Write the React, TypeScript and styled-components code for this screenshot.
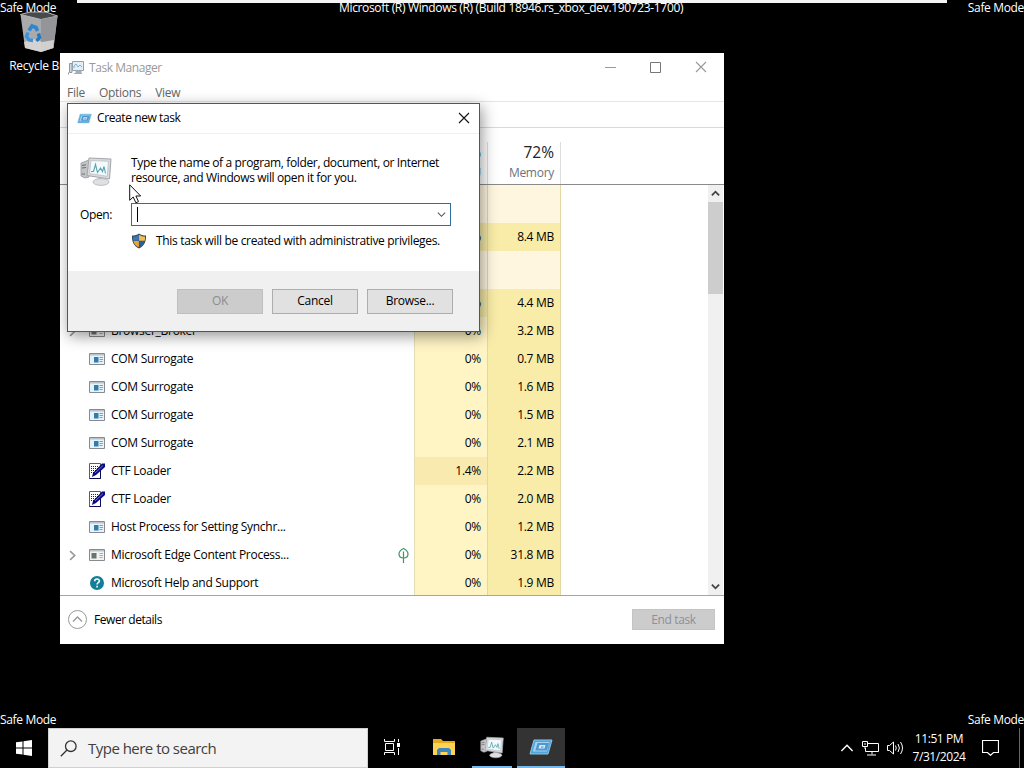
import styled, { createGlobalStyle } from "styled-components";

const GlobalStyle = createGlobalStyle`
  * {
    box-sizing: border-box;
  }

  body {
    margin: 0;
    background: #000;
    overflow: hidden;
  }
`;

const Desktop = styled.div`
  position: relative;
  width: 1024px;
  height: 768px;
  overflow: hidden;
  display: flex;
  flex-direction: column;
  background: #000;
  color: #000;
  font-family: "Open Sans", "Noto Sans", sans-serif;
  font-size: 12px;
  line-height: 16px;
  letter-spacing: -0.28px;
  white-space: nowrap;
`;

const Workspace = styled.main`
  flex: 1;
`;

const Watermark = styled.div<{ $edge: "top" | "bottom"; $side: "left" | "right" }>`
  position: absolute;
  ${(p) => (p.$edge === "top" ? "top: 0" : "bottom: 40px")};
  ${(p) => p.$side}: 0;
  color: #fff;
  letter-spacing: -0.34px;
`;

const BuildLabel = styled.div`
  position: absolute;
  top: 0;
  left: 339px;
  color: #fff;
  letter-spacing: -0.34px;
`;

const TopEdge = styled.div`
  position: absolute;
  top: 0;
  left: 77px;
  width: 870px;
  height: 3px;
  background: #f4f4f4;
`;

const DesktopIcon = styled.div`
  position: absolute;
  top: 10px;
  left: 9px;
  width: 60px;
  color: #fff;
  display: flex;
  flex-direction: column;
  align-items: center;
  gap: 4px;
`;

/* Task Manager window */

const Window = styled.section`
  position: absolute;
  top: 53px;
  left: 60px;
  width: 664px;
  height: 591px;
  background: #fff;
  display: flex;
  flex-direction: column;
`;

const TitleBar = styled.header`
  height: 30px;
  padding-left: 8px;
  display: flex;
  align-items: center;
  gap: 5px;
  color: #999;
`;

const WindowTitle = styled.span`
  flex: 1;
  letter-spacing: -0.44px;
`;

const WindowButtons = styled.div`
  display: flex;
  height: 29px;
  padding-bottom: 2px;
`;

const WindowButton = styled.div`
  width: 45.5px;
  display: flex;
  align-items: center;
  justify-content: center;
`;

const MenuBar = styled.nav`
  height: 19px;
  padding: 2px 0 0 7px;
  display: flex;
  align-items: center;
  gap: 14px;
  color: #666;
  border-bottom: 1px solid #e6e6e6;
`;

const TabStrip = styled.div`
  height: 26px;
  border-bottom: 1px solid #d9d9d9;
`;

const HeaderRow = styled.div`
  height: 57px;
  display: flex;
  align-items: flex-end;
  border-bottom: 1px solid #8a8a8a;
`;

const NameSpace = styled.div`
  width: 354px;
`;

const HeaderCell = styled.div<{ $width: number }>`
  width: ${(p) => p.$width}px;
  height: 42px;
  padding-right: 6px;
  border-right: 1px solid #dcdcdc;
  display: flex;
  flex-direction: column;
  align-items: flex-end;
  color: #6b7280;
`;

const HeaderValue = styled.span`
  font-size: 15.5px;
  line-height: 21px;
  color: #222;
  letter-spacing: 0;
`;

const HeaderLabel = styled.span`
  line-height: 20px;
`;

const ListArea = styled.div`
  height: 410px;
  display: flex;
  overflow: hidden;
`;

const Rows = styled.div`
  flex: 1;
`;

const Row = styled.div<{ $height: number }>`
  height: ${(p) => p.$height}px;
  display: flex;
`;

const NameCell = styled.div`
  width: 355px;
  padding: 0 5px 0 7px;
  border-right: 1px solid #e4dcb4;
  display: flex;
  align-items: center;
`;

const Expander = styled.div`
  width: 22px;
  display: flex;
`;

const ProcessName = styled.span`
  flex: 1;
  margin-left: 6px;
`;

const ValueCell = styled.div<{ $fill: string }>`
  width: 73px;
  padding-right: 6px;
  background: ${(p) => p.$fill};
  border-right: 1px solid #e2d8a4;
  display: flex;
  align-items: center;
  justify-content: flex-end;
`;

const ScrollBar = styled.div`
  width: 17px;
  padding: 0 1px 0 1px;
  background: #fff;
  display: flex;
`;

const ScrollTrack = styled.div`
  width: 15px;
  background: #f0f0f0;
  display: flex;
  flex-direction: column;
  align-items: center;
`;

const ScrollThumb = styled.div`
  width: 15px;
  height: 92px;
  background: #cdcdcd;
`;

const ScrollArrow = styled.div`
  height: 17px;
  display: flex;
  align-items: center;
`;

const TrackSpace = styled.div`
  flex: 1;
`;

const Footer = styled.footer`
  flex: 1;
  padding: 0 9px 1px 8px;
  border-top: 1px solid #a5a5a5;
  display: flex;
  align-items: center;
  gap: 7px;
`;

const FooterLabel = styled.span`
  flex: 1;
  letter-spacing: -0.45px;
`;

const EndTask = styled.button`
  width: 83px;
  height: 21px;
  padding: 0;
  border: 1px solid #c4c4c4;
  background: #cccccc;
  color: #8f8f98;
  font: inherit;
  letter-spacing: -0.35px;
`;

/* Run dialog */

const Dialog = styled.section`
  position: absolute;
  top: 103px;
  left: 67px;
  width: 413px;
  height: 229px;
  background: #fff;
  border: 1px solid #555;
  box-shadow: 2px 4px 14px rgba(0, 0, 0, 0.42);
  display: flex;
  flex-direction: column;
`;

const DialogTitle = styled.header`
  height: 30px;
  padding: 0 9px 1px 9px;
  display: flex;
  align-items: center;
  justify-content: space-between;
  border-bottom: 1px solid #f0f0f0;
  letter-spacing: -0.4px;
`;

const TitleGroup = styled.div`
  display: flex;
  align-items: center;
  gap: 5px;
`;

const DialogBody = styled.div`
  height: 137px;
  padding: 21px 0 0 12px;
  display: grid;
  grid-template-columns: 51px 320px;
  grid-template-rows: 48px 23px 30px;
`;

const Prompt = styled.p`
  margin: 0;
  line-height: 15px;
  letter-spacing: -0.36px;
`;

const OpenLabel = styled.label`
  align-self: center;
  letter-spacing: -0.4px;
`;

const ComboBox = styled.div`
  padding: 0 4px 0 5px;
  border: 1px solid #2f6f9f;
  display: flex;
  align-items: center;
  justify-content: space-between;
`;

const Caret = styled.div`
  width: 1px;
  height: 15px;
  background: #000;
`;

const Notice = styled.div`
  grid-column: 2;
  display: flex;
  align-items: center;
  gap: 9px;
  letter-spacing: -0.33px;
`;

const DialogButtons = styled.div`
  flex: 1;
  padding: 0 26px 0 0;
  background: #f0f0f0;
  display: flex;
  align-items: center;
  justify-content: flex-end;
  gap: 9px;
`;

const DialogButton = styled.button`
  width: 86px;
  height: 25px;
  padding: 0;
  background: #e1e1e1;
  border: 1px solid #adadad;
  color: #000;
  font: inherit;
  letter-spacing: -0.28px;

  &:disabled {
    background: #cccccc;
    border-color: #bfbfbf;
    color: #8c8c8c;
  }
`;

const Pointer = styled.svg`
  position: absolute;
  top: 184px;
  left: 129px;
`;

/* Taskbar */

const Taskbar = styled.footer`
  height: 40px;
  display: flex;
  color: #fff;
`;

const StartButton = styled.div`
  width: 48px;
  display: flex;
  align-items: center;
  justify-content: center;
`;

const SearchBox = styled.div`
  width: 320px;
  padding-left: 11px;
  background: #f3f3f3;
  border: 1px solid #d0d0d0;
  color: #404040;
  display: flex;
  align-items: center;
  gap: 11px;
  font-size: 15px;
  letter-spacing: -0.52px;
`;

const TaskButton = styled.div<{ $width: number; $running?: boolean; $active?: boolean }>`
  width: ${(p) => p.$width}px;
  margin-right: ${(p) => (p.$running && !p.$active ? 5 : 0)}px;
  background: ${(p) => (p.$active ? "#333" : "transparent")};
  border-bottom: 2px solid ${(p) => (p.$running ? "#76b9ed" : "transparent")};
  display: flex;
  align-items: center;
  justify-content: center;
`;

const Tray = styled.div`
  margin-left: auto;
  display: flex;
  align-items: center;
`;

const TrayIcons = styled.div`
  display: flex;
  align-items: center;
  gap: 8px;
`;

const Clock = styled.div`
  width: 70px;
  text-align: center;
  line-height: 18px;
  letter-spacing: -0.42px;
`;

const ActionCenter = styled.div`
  width: 45px;
  padding-left: 8px;
  display: flex;
`;

const ShowDesktop = styled.div`
  width: 5px;
  height: 40px;
  border-left: 1px solid #666;
`;

type ChevronProps = {
  dir: "up" | "down" | "right";
  size: number;
  color: string;
  weight?: number;
};

const Chevron = ({ dir, size, color, weight = 1.2 }: ChevronProps) => {
  const turn = { up: 0, down: 180, right: 90 }[dir];
  return (
    <svg width={size} height={size} viewBox="0 0 10 10">
      <path
        d="M1 7.2 5 3l4 4.2"
        fill="none"
        stroke={color}
        strokeWidth={weight}
        transform={`rotate(${turn} 5 5)`}
      />
    </svg>
  );
};

const Cross = ({ color }: { color: string }) => (
  <svg width="12" height="12" viewBox="0 0 12 12">
    <path d="M1 1l10 10M11 1 1 11" stroke={color} strokeWidth="1.1" />
  </svg>
);

const MonitorIcon = ({ size }: { size: number }) => (
  <svg width={size} height={size} viewBox="0 0 32 32">
    <path d="M1 8l8-3v17l-4 1-4-2z" fill="#c2c4c8" stroke="#94979c" strokeWidth=".8" />
    <path d="M2 10.500l4-.8M2 13l4-.5M2 19h3" stroke="#6b6e74" />
    <path d="M9 3l22 1-1.500 20L7 20.500z" fill="#d9dbde" stroke="#a3a6ab" />
    <path d="M11 5.500l17.500.8-1.200 15L9.500 18.500z" fill="#f3fafb" stroke="#b3bcc2" strokeWidth=".7" />
    <path d="M11 16.500h2.500l2-7 2 8 3-4.500 2 3.500 1.500-5 1.500 7" fill="none" stroke="#5aa3b3" strokeWidth="1.100" />
    <path d="M18 22.500l6 1v4h-7z" fill="#c3c5c9" />
    <ellipse cx="21" cy="27" rx="8" ry="3.400" fill="#dfe0e3" stroke="#b0b2b6" strokeWidth=".8" />
  </svg>
);

const SmallMonitorIcon = () => (
  <svg width="16" height="16" viewBox="0 0 16 16">
    <path d="M4 3.500H1.500v9H4zM.5 14.500v-2" fill="#d5dade" stroke="#8f979f" />
    <path d="M4.500 1.500h11v9h-11z" fill="#e3eef6" stroke="#8ba3b5" />
    <path d="M6 8V6l2-2 2 3 2-2 2 2" fill="none" stroke="#7fb0cf" />
    <path d="M8 11h5v2H8zM6 13.500h8" fill="#a6adb3" stroke="#a6adb3" />
  </svg>
);

const RunIcon = ({ width, height }: { width: number; height: number }) => (
  <svg width={width} height={height} viewBox="0 0 24 16">
    <path d="M5 1h18l-4 14H1z" fill="#4fa5d9" stroke="#8cc6e8" />
    <path d="M6.500 3h14l-2.700 9.500H3.800z" fill="#a5d3ef" />
    <path d="M8.500 4h11.500l-2.200 7.500H6.300z" fill="#4f97cf" />
    <path d="M10.500 6h6l-1 3.500h-6z" fill="#d3ebf9" />
    <path d="M12 8h2.500" stroke="#3f86c2" />
  </svg>
);

const AppIcon = ({ gray }: { gray?: boolean }) => (
  <svg width="16" height="12" viewBox="0 0 16 12">
    <path d="M.5.5h15v11H.5z" fill={gray ? "#f2f2f2" : "#e6f3fb"} stroke="#858b90" />
    <path d="M1 1h14v1.500H1z" fill="#b9c2c8" />
    <path d={gray ? "M2.500 4h5v5.500h-5z" : "M5 4h4.500v5.500H5z"} fill={gray ? "#68766f" : "#2f7dad"} />
    <path d="M10.500 4.500h3.500M10.500 6.500H14M10.500 8.500h3" stroke={gray ? "#a8adb0" : "#62a9d6"} />
  </svg>
);

const PenIcon = () => (
  <svg width="16" height="16" viewBox="0 0 16 16">
    <path d="M.5.5h11v15H.5z" fill="#fff" stroke="#55606a" />
    <path d="M2 3.500h8M2 5.500h7M2 7.500h5M2 9.500h3" stroke="#1b1b70" strokeDasharray="1 1" />
    <path d="M11.500 8v7.500H.5" fill="none" stroke="#0b0b5a" />
    <path d="M13 .5h3V4l-9 8-4 2 1-4z" fill="#0a0a80" />
    <path d="M6 10l8-7.500" stroke="#6c76c8" />
  </svg>
);

const HelpIcon = () => (
  <svg width="16" height="16" viewBox="0 0 16 16">
    <circle cx="8" cy="8" r="7" fill="#137e98" />
    <path
      d="M5.700 6.200C5.700 3.400 10.400 3.400 10.400 6c0 1.700-2.300 1.700-2.300 3.400M8.100 10.700v1.700"
      fill="none"
      stroke="#fff"
      strokeWidth="1.600"
    />
  </svg>
);

const LeafIcon = () => (
  <svg width="11" height="17" viewBox="0 0 11 17">
    <path
      d="M5.500 1.500C2.500 3 1 4.500 1 7s2 4 4.500 4S10 9.500 10 7 8.500 3 5.500 1.500zM5.500 4.500V16"
      fill="none"
      stroke="#3c9660"
      strokeWidth="1.200"
    />
  </svg>
);

const ShieldIcon = () => (
  <svg width="16" height="16" viewBox="0 0 16 16">
    <path d="M8 .5c2 1.500 4 2 7 2 .3 6-1.500 10.500-7 13-5.500-2.500-7.300-7-7-13 3 0 5-.5 7-2z" fill="#37475a" />
    <path d="M7.900 1.800v5.900H2.200c-.2-1.300-.3-2.600-.3-4 2.300-.1 4-.6 6-1.900z" fill="#3a78b5" />
    <path d="M8.100 1.800v5.900h5.700c.2-1.300.3-2.600.3-4-2.300-.1-4-.6-6-1.900z" fill="#f3bd55" />
    <path d="M7.900 7.900v6.300C4.700 12.800 3 10.800 2.400 7.900z" fill="#eaa635" />
    <path d="M8.100 7.900v6.300c3.200-1.400 4.900-3.400 5.500-6.300z" fill="#2a5f9b" />
  </svg>
);

const RecycleBinIcon = () => (
  <svg width="40" height="44" viewBox="0 0 40 44">
    <path d="M1.500 4.500 11 2h16l11.500 4-4 32-12.500 4-16-4z" fill="#a9aaac" />
    <path d="M1.500 4.500 11 2h16l11.500 4L22 9.500z" fill="#48494b" stroke="#b4b5b7" />
    <path d="M22 9.500l16.500-3.500-4 32L22 42z" fill="#949598" />
    <path d="M5 32l11-3 7 3 12-2-.8 8L22 42 6 38z" fill="#dcdad7" opacity=".85" />
    <path d="M10 20.500l3-4.500 4 1.500 1.500 3.500" fill="none" stroke="#2d86d2" strokeWidth="3.600" />
    <path d="M9 22.500l-1.500 4 2.500 3.500 4 .5" fill="none" stroke="#3a93dc" strokeWidth="3.400" />
    <path d="M19.500 23.500l1 4-3 3.500" fill="none" stroke="#2676c0" strokeWidth="3.400" />
  </svg>
);

const FolderIcon = () => (
  <svg width="22" height="18" viewBox="0 0 22 18">
    <path d="M0 1h8l2 2h12v14H0z" fill="#e8a820" />
    <path d="M0 5h22v12H0z" fill="#fcd354" />
    <path d="M4 17v-5l2-2h10l2 2v5h-3.500v-3h-7v3z" fill="#3f86bd" />
  </svg>
);

type Process = {
  name: string;
  icon?: "app" | "gray" | "pen" | "help";
  cpu?: string;
  memory?: string;
  expandable?: boolean;
  leaf?: boolean;
  group?: boolean;
  cpuFill?: string;
};

const processes: Process[] = [
  { name: "", group: true },
  { name: "", cpu: "0%", memory: "8.4 MB", cpuFill: "#f5e9a8" },
  { name: "", group: true },
  { name: "", cpu: "0%", memory: "4.4 MB", cpuFill: "#f5e9a8" },
  { name: "Browser_Broker", icon: "gray", cpu: "0%", memory: "3.2 MB", expandable: true },
  { name: "COM Surrogate", icon: "app", cpu: "0%", memory: "0.7 MB" },
  { name: "COM Surrogate", icon: "app", cpu: "0%", memory: "1.6 MB" },
  { name: "COM Surrogate", icon: "app", cpu: "0%", memory: "1.5 MB" },
  { name: "COM Surrogate", icon: "app", cpu: "0%", memory: "2.1 MB" },
  { name: "CTF Loader", icon: "pen", cpu: "1.4%", memory: "2.2 MB", cpuFill: "#f9ebaf" },
  { name: "CTF Loader", icon: "pen", cpu: "0%", memory: "2.0 MB" },
  { name: "Host Process for Setting Synchr...", icon: "app", cpu: "0%", memory: "1.2 MB" },
  { name: "Microsoft Edge Content Process...", icon: "gray", cpu: "0%", memory: "31.8 MB", expandable: true, leaf: true },
  { name: "Microsoft Help and Support", icon: "help", cpu: "0%", memory: "1.9 MB" },
];

const ProcessIcon = ({ kind }: { kind: Process["icon"] }) => {
  if (kind === "pen") return <PenIcon />;
  if (kind === "help") return <HelpIcon />;
  return <AppIcon gray={kind === "gray"} />;
};

const ProcessRow = ({ process }: { process: Process }) => (
  <Row $height={process.group ? 38 : 28}>
    <NameCell>
      <Expander>
        {process.expandable && <Chevron dir="right" size={11} color="#999" weight={1.5} />}
      </Expander>
      {process.icon && <ProcessIcon kind={process.icon} />}
      <ProcessName>{process.name}</ProcessName>
      {process.leaf && <LeafIcon />}
    </NameCell>
    <ValueCell $fill={process.group ? "#fff6e0" : process.cpuFill ?? "#fff4c4"}>
      {process.cpu}
    </ValueCell>
    <ValueCell $fill={process.group ? "#fff6e0" : "#f9eca8"}>{process.memory}</ValueCell>
  </Row>
);

const TaskManager = () => (
  <Window>
    <TitleBar>
      <SmallMonitorIcon />
      <WindowTitle>Task Manager</WindowTitle>
      <WindowButtons>
        <WindowButton>
          <svg width="11" height="11">
            <path d="M0 5.500h11" stroke="#999" />
          </svg>
        </WindowButton>
        <WindowButton>
          <svg width="11" height="11">
            <path d="M.5.5h10v10H.5z" fill="none" stroke="#777" />
          </svg>
        </WindowButton>
        <WindowButton>
          <Cross color="#999" />
        </WindowButton>
      </WindowButtons>
    </TitleBar>
    <MenuBar>
      <span>File</span>
      <span>Options</span>
      <span>View</span>
    </MenuBar>
    <TabStrip />
    <HeaderRow>
      <NameSpace />
      <HeaderCell $width={74}>
        <HeaderValue>5%</HeaderValue>
        <HeaderLabel>CPU</HeaderLabel>
      </HeaderCell>
      <HeaderCell $width={73}>
        <HeaderValue>72%</HeaderValue>
        <HeaderLabel>Memory</HeaderLabel>
      </HeaderCell>
    </HeaderRow>
    <ListArea>
      <Rows>
        {processes.map((process, i) => (
          <ProcessRow key={i} process={process} />
        ))}
      </Rows>
      <ScrollBar>
        <ScrollTrack>
          <ScrollArrow>
            <Chevron dir="up" size={9} color="#444" weight={2} />
          </ScrollArrow>
          <ScrollThumb />
          <TrackSpace />
          <ScrollArrow>
            <Chevron dir="down" size={9} color="#444" weight={2} />
          </ScrollArrow>
        </ScrollTrack>
      </ScrollBar>
    </ListArea>
    <Footer>
      <svg width="19" height="19" viewBox="0 0 19 19">
        <circle cx="9.500" cy="9.500" r="9" fill="none" stroke="#999" />
        <path d="M5 11.500l4.500-4.500 4.500 4.500" fill="none" stroke="#999" strokeWidth="1.300" />
      </svg>
      <FooterLabel>Fewer details</FooterLabel>
      <EndTask disabled>End task</EndTask>
    </Footer>
  </Window>
);

const RunDialog = () => (
  <Dialog>
    <DialogTitle>
      <TitleGroup>
        <RunIcon width={15} height={11} />
        <span>Create new task</span>
      </TitleGroup>
      <Cross color="#111" />
    </DialogTitle>
    <DialogBody>
      <MonitorIcon size={32} />
      <Prompt>
        Type the name of a program, folder, document, or Internet
        <br />
        resource, and Windows will open it for you.
      </Prompt>
      <OpenLabel>Open:</OpenLabel>
      <ComboBox>
        <Caret />
        <Chevron dir="down" size={9} color="#555" />
      </ComboBox>
      <Notice>
        <ShieldIcon />
        <span>This task will be created with administrative privileges.</span>
      </Notice>
    </DialogBody>
    <DialogButtons>
      <DialogButton disabled>OK</DialogButton>
      <DialogButton>Cancel</DialogButton>
      <DialogButton>Browse...</DialogButton>
    </DialogButtons>
  </Dialog>
);

export default function App() {
  return (
    <Desktop>
      <GlobalStyle />
      <Workspace>
        <TopEdge />
        <DesktopIcon>
          <RecycleBinIcon />
          <span>Recycle Bin</span>
        </DesktopIcon>
        <Watermark $edge="top" $side="left">Safe Mode</Watermark>
        <Watermark $edge="top" $side="right">Safe Mode</Watermark>
        <Watermark $edge="bottom" $side="left">Safe Mode</Watermark>
        <Watermark $edge="bottom" $side="right">Safe Mode</Watermark>
        <BuildLabel>Microsoft (R) Windows (R) (Build 18946.rs_xbox_dev.190723-1700)</BuildLabel>
        <TaskManager />
        <RunDialog />
        <Pointer width="13" height="20" viewBox="0 0 13 20">
          <path
            d="M.7.8v15.500l3.500-3.300 2.700 5.800 2.600-1.200-2.600-5.600h4.800z"
            fill="#fff"
            stroke="#111"
          />
        </Pointer>
      </Workspace>
      <Taskbar>
        <StartButton>
          <svg width="16" height="16" viewBox="0 0 16 16">
            <path
              d="M0 2.300 6.500 1.400v6.100H0zM7.500 1.300 16 0v7.500H7.500zM0 8.500h6.500v6.100L0 13.700zM7.500 8.500H16V16l-8.500-1.300z"
              fill="#fff"
            />
          </svg>
        </StartButton>
        <SearchBox>
          <svg width="17" height="17" viewBox="0 0 17 17">
            <path d="M7 10 .8 16.200" stroke="#333" strokeWidth="1.300" />
            <circle cx="10.800" cy="6.200" r="5.300" fill="none" stroke="#333" strokeWidth="1.300" />
          </svg>
          Type here to search
        </SearchBox>
        <TaskButton $width={48}>
          <svg width="16" height="16" viewBox="0 0 16 16">
            <path
              d="M.5 0v2.500h10V0M.5 16v-2.500h10V16M1.500 4.500h8v7h-8zM14.500 0v3M14.500 9v7"
              fill="none"
              stroke="#fff"
            />
            <path d="M13 4h3v4h-3z" fill="#fff" />
          </svg>
        </TaskButton>
        <TaskButton $width={56}>
          <FolderIcon />
        </TaskButton>
        <TaskButton $width={40} $running>
          <MonitorIcon size={24} />
        </TaskButton>
        <TaskButton $width={48} $running $active>
          <RunIcon width={24} height={16} />
        </TaskButton>
        <Tray>
          <TrayIcons>
            <Chevron dir="up" size={14} color="#fff" weight={1} />
            <svg width="17" height="15" viewBox="0 0 17 15">
              <path
                d="M6 2.500h10.500v8H3.500V7M.5.5h5v5h-5zM10 10.500v3M5 14h9M2 3h2M3 5.500V8"
                fill="none"
                stroke="#fff"
              />
            </svg>
            <svg width="17" height="14" viewBox="0 0 17 14">
              <path
                d="M.5 4.500h2l4-3.500v12l-4-3.500h-2zM8.500 4.500q1.500 2.500 0 5M11 3q2.800 4 0 8M13.500 1q4 6 0 12"
                fill="none"
                stroke="#fff"
              />
            </svg>
          </TrayIcons>
          <Clock>
            11:51 PM
            <br />
            7/31/2024
          </Clock>
          <ActionCenter>
            <svg width="17" height="16" viewBox="0 0 17 16">
              <path d="M.5.5h16v12h-5l-3 2.800-3-2.800h-5z" fill="none" stroke="#fff" strokeWidth="1.200" />
            </svg>
          </ActionCenter>
          <ShowDesktop />
        </Tray>
      </Taskbar>
    </Desktop>
  );
}
